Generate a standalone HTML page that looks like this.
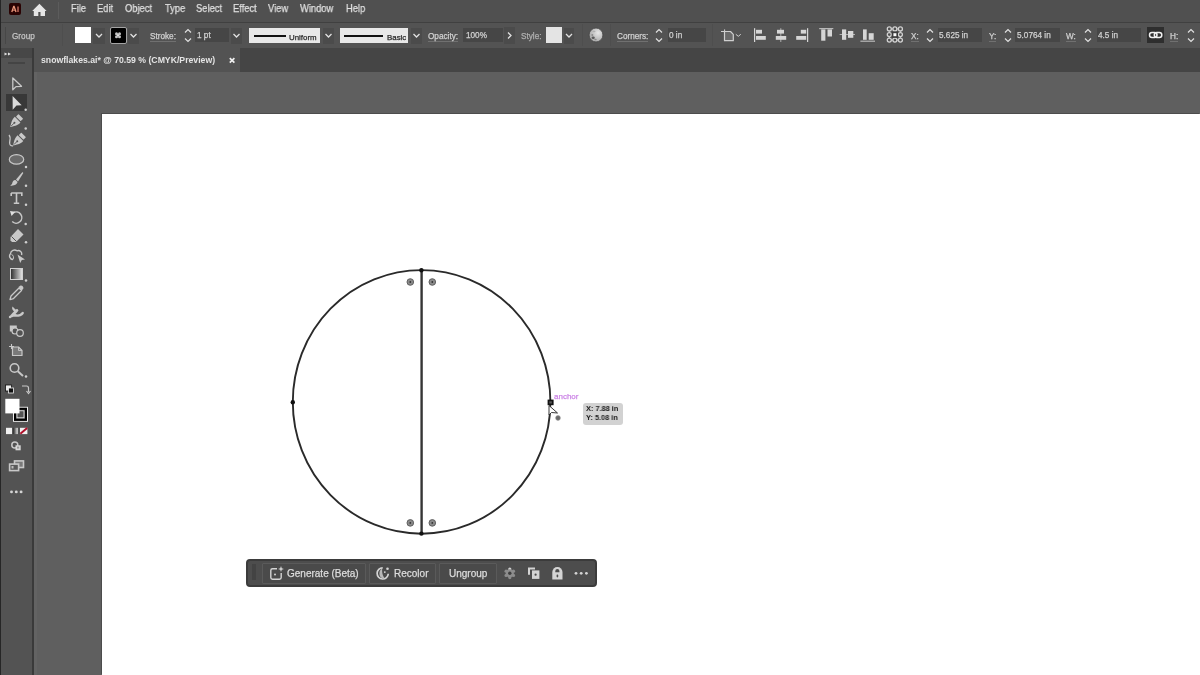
<!DOCTYPE html>
<html><head><meta charset="utf-8"><style>
*{margin:0;padding:0;box-sizing:border-box}
html,body{width:1200px;height:675px;overflow:hidden;background:#5f5f5f;font-family:"Liberation Sans",sans-serif}
.abs{position:absolute}
.t{position:absolute;white-space:nowrap;-webkit-text-stroke:0.25px currentColor;will-change:transform}
</style></head><body>
<div class="abs" style="left:0px;top:0px;width:1200px;height:22px;background:#505050;"></div>
<div class="abs" style="left:0px;top:22px;width:1200px;height:1px;background:#404040;"></div>
<div class="abs" style="left:0px;top:23px;width:1200px;height:25px;background:#535353;"></div>
<div class="abs" style="left:33px;top:48px;width:1167px;height:24px;background:#454545;"></div>
<div class="abs" style="left:34px;top:48px;width:206px;height:24px;background:#535353;"></div>
<div class="abs" style="left:1px;top:48px;width:31px;height:627px;background:#535353;"></div>
<div class="abs" style="left:1px;top:48px;width:31px;height:10px;background:#474747;"></div>
<div class="abs" style="left:32px;top:48px;width:2px;height:627px;background:#3a3a3a;"></div>
<div class="abs" style="left:34px;top:72px;width:1166px;height:603px;background:#5f5f5f;"></div>
<div class="abs" style="left:34px;top:72px;width:3px;height:603px;background:#636363;"></div>
<div class="abs" style="left:102px;top:114px;width:1098px;height:561px;background:#ffffff;box-shadow:-1px -1px 0 #4c4c4c"></div>
<div class="abs" style="left:0px;top:0px;width:1px;height:675px;background:#262626;"></div>
<div class="abs" style="left:8.7px;top:3.4px;width:12.3px;height:11.6px;background:#2a0303;border-radius:2px"></div>
<div class="t" style="left:71px;top:1.5px;font-size:11px;line-height:13px;color:#e0e0e0;transform:scaleX(0.85);transform-origin:0 0">File</div>
<div class="t" style="left:97px;top:1.5px;font-size:11px;line-height:13px;color:#e0e0e0;transform:scaleX(0.85);transform-origin:0 0">Edit</div>
<div class="t" style="left:125px;top:1.5px;font-size:11px;line-height:13px;color:#e0e0e0;transform:scaleX(0.85);transform-origin:0 0">Object</div>
<div class="t" style="left:165px;top:1.5px;font-size:11px;line-height:13px;color:#e0e0e0;transform:scaleX(0.85);transform-origin:0 0">Type</div>
<div class="t" style="left:196px;top:1.5px;font-size:11px;line-height:13px;color:#e0e0e0;transform:scaleX(0.85);transform-origin:0 0">Select</div>
<div class="t" style="left:233px;top:1.5px;font-size:11px;line-height:13px;color:#e0e0e0;transform:scaleX(0.85);transform-origin:0 0">Effect</div>
<div class="t" style="left:268px;top:1.5px;font-size:11px;line-height:13px;color:#e0e0e0;transform:scaleX(0.85);transform-origin:0 0">View</div>
<div class="t" style="left:300px;top:1.5px;font-size:11px;line-height:13px;color:#e0e0e0;transform:scaleX(0.85);transform-origin:0 0">Window</div>
<div class="t" style="left:346px;top:1.5px;font-size:11px;line-height:13px;color:#e0e0e0;transform:scaleX(0.85);transform-origin:0 0">Help</div>
<div class="abs" style="left:93px;top:28px;width:12px;height:15.5px;background:#4b4b4b;"></div>
<div class="abs" style="left:128px;top:28px;width:11px;height:15.5px;background:#4b4b4b;"></div>
<div class="abs" style="left:231px;top:28px;width:11px;height:15.5px;background:#4b4b4b;"></div>
<div class="abs" style="left:323px;top:28px;width:11px;height:15.5px;background:#4b4b4b;"></div>
<div class="abs" style="left:411px;top:28px;width:11px;height:15.5px;background:#4b4b4b;"></div>
<div class="abs" style="left:564px;top:28px;width:10px;height:15.5px;background:#4b4b4b;"></div>
<div class="abs" style="left:75px;top:27px;width:16px;height:16px;background:#ffffff;"></div>
<div class="abs" style="left:110px;top:27px;width:16.799999999999997px;height:16.799999999999997px;background:#000;border:1.6px solid #a4a4a4;border-radius:2px"></div>
<div class="abs" style="left:195px;top:28px;width:34px;height:14px;background:#464646;"></div>
<div class="abs" style="left:463px;top:28px;width:40px;height:14px;background:#464646;"></div>
<div class="abs" style="left:668px;top:28px;width:38px;height:14px;background:#464646;"></div>
<div class="abs" style="left:938px;top:28px;width:44px;height:14px;background:#464646;"></div>
<div class="abs" style="left:1015px;top:28px;width:45px;height:14px;background:#464646;"></div>
<div class="abs" style="left:1097px;top:28px;width:44px;height:14px;background:#464646;"></div>
<div class="abs" style="left:249.2px;top:27.7px;width:71.19999999999999px;height:15.500000000000004px;background:#e8e8e8;"></div>
<div class="abs" style="left:254px;top:35px;width:32px;height:2.3999999999999986px;background:#111;"></div>
<div class="abs" style="left:339.7px;top:27.7px;width:68.60000000000002px;height:15.500000000000004px;background:#e8e8e8;"></div>
<div class="abs" style="left:344px;top:35px;width:39px;height:2.3999999999999986px;background:#111;"></div>
<div class="abs" style="left:504px;top:27px;width:11px;height:17px;background:#4b4b4b;"></div>
<div class="abs" style="left:546px;top:27px;width:16px;height:16px;background:#e4e4e4;"></div>
<div class="abs" style="left:1147px;top:27px;width:17px;height:16px;background:#2e2e2e;"></div>
<div class="t" style="left:12px;top:32px;font-size:8.2px;line-height:10.2px;color:#c4c4c4;">Group</div>
<div class="t" style="left:150px;top:32px;font-size:8.2px;line-height:9px;color:#d0d0d0;border-bottom:1px solid #707070">Stroke:</div>
<div class="t" style="left:197px;top:31.2px;font-size:8.2px;line-height:10.2px;color:#d0d0d0;">1 pt</div>
<div class="t" style="left:289px;top:32.8px;font-size:7.9px;line-height:9.9px;color:#2a2a2a;">Uniform</div>
<div class="t" style="left:386.5px;top:32.8px;font-size:7.9px;line-height:9.9px;color:#2a2a2a;">Basic</div>
<div class="t" style="left:428px;top:32px;font-size:8.2px;line-height:9px;color:#d0d0d0;border-bottom:1px solid #707070">Opacity:</div>
<div class="t" style="left:466px;top:31.2px;font-size:8.2px;line-height:10.2px;color:#d0d0d0;">100%</div>
<div class="t" style="left:521px;top:32px;font-size:8.2px;line-height:10.2px;color:#b0b0b0;">Style:</div>
<div class="t" style="left:617px;top:32px;font-size:8.2px;line-height:9px;color:#d0d0d0;border-bottom:1px solid #707070">Corners:</div>
<div class="t" style="left:669px;top:31.2px;font-size:8.2px;line-height:10.2px;color:#d0d0d0;">0 in</div>
<div class="t" style="left:911px;top:32px;font-size:8.2px;line-height:9px;color:#d0d0d0;border-bottom:1px solid #707070">X:</div>
<div class="t" style="left:939px;top:31.2px;font-size:8.2px;line-height:10.2px;color:#d0d0d0;">5.625 in</div>
<div class="t" style="left:989px;top:32px;font-size:8.2px;line-height:9px;color:#d0d0d0;border-bottom:1px solid #707070">Y:</div>
<div class="t" style="left:1017px;top:31.2px;font-size:8.2px;line-height:10.2px;color:#d0d0d0;">5.0764 in</div>
<div class="t" style="left:1066px;top:32px;font-size:8.2px;line-height:9px;color:#d0d0d0;border-bottom:1px solid #707070">W:</div>
<div class="t" style="left:1098px;top:31.2px;font-size:8.2px;line-height:10.2px;color:#d0d0d0;">4.5 in</div>
<div class="t" style="left:1170px;top:32px;font-size:8.2px;line-height:9px;color:#d0d0d0;border-bottom:1px solid #707070">H:</div>
<div class="abs" style="left:58px;top:2px;width:1px;height:17px;background:#5c5c5c;"></div>
<div class="abs" style="left:5px;top:27px;width:1px;height:17px;background:#474747;"></div>
<div class="abs" style="left:62px;top:24px;width:1px;height:22px;background:#4e4e4e;"></div>
<div class="abs" style="left:582px;top:24px;width:1px;height:22px;background:#4e4e4e;"></div>
<div class="abs" style="left:610px;top:24px;width:1px;height:22px;background:#4e4e4e;"></div>
<div class="abs" style="left:712px;top:24px;width:1px;height:22px;background:#4e4e4e;"></div>
<div class="t" style="left:41px;top:55.3px;font-size:8.7px;line-height:11px;color:#e4e4e4;font-weight:bold;-webkit-text-stroke:0">snowflakes.ai* @ 70.59 % (CMYK/Preview)</div>
<div class="abs" style="left:8px;top:62px;width:17px;height:2px;background:#444444;"></div>
<div class="abs" style="left:6px;top:94px;width:21px;height:17px;background:#383838;"></div>
<div class="abs" style="left:582.5px;top:402.5px;width:40.0px;height:22.0px;background:#d2d2d2;border-radius:3px"></div>
<div class="t" style="left:554px;top:392px;font-size:8px;line-height:9px;color:#cc86e6;">anchor</div>
<div class="t" style="left:585.5px;top:403.6px;font-size:7.6px;line-height:9.5px;color:#1a1a1a;font-weight:bold;-webkit-text-stroke:0;transform:scaleX(0.97);transform-origin:0 0">X: 7.88 in</div>
<div class="t" style="left:585.5px;top:413.1px;font-size:7.6px;line-height:9.5px;color:#1a1a1a;font-weight:bold;-webkit-text-stroke:0;transform:scaleX(0.97);transform-origin:0 0">Y: 5.08 in</div>
<div class="abs" style="left:246px;top:558.5px;width:351px;height:28.5px;background:#4d4d4d;border:2px solid #3b3b3b;border-radius:4px"></div>
<div class="abs" style="left:252.4px;top:564.4px;width:3.5999999999999943px;height:15.600000000000023px;background:#434343;"></div>
<div class="abs" style="left:262px;top:562.5px;width:104px;height:21.5px;background:#4a4a4a;border:1px solid #5a5a5a;border-radius:1px"></div>
<div class="abs" style="left:369px;top:562.5px;width:67px;height:21.5px;background:#4a4a4a;border:1px solid #5a5a5a;border-radius:1px"></div>
<div class="abs" style="left:439px;top:562.5px;width:58px;height:21.5px;background:#4a4a4a;border:1px solid #5a5a5a;border-radius:1px"></div>
<div class="t" style="left:287px;top:567.5px;font-size:10px;line-height:12px;color:#dcdcdc;">Generate (Beta)</div>
<div class="t" style="left:394px;top:567.5px;font-size:10px;line-height:12px;color:#dcdcdc;">Recolor</div>
<div class="t" style="left:448.5px;top:567.5px;font-size:10px;line-height:12px;color:#dcdcdc;">Ungroup</div>
<svg class="abs" style="left:0;top:0" width="1200" height="675">
<path d="M96.0 34.0 L99.0 37.0 L102.0 34.0" fill="none" stroke="#e0e0e0" stroke-width="1.3"/>
<path d="M130.5 34.0 L133.5 37.0 L136.5 34.0" fill="none" stroke="#e0e0e0" stroke-width="1.3"/>
<path d="M233.5 34.0 L236.5 37.0 L239.5 34.0" fill="none" stroke="#e0e0e0" stroke-width="1.3"/>
<path d="M325.5 34.0 L328.5 37.0 L331.5 34.0" fill="none" stroke="#e0e0e0" stroke-width="1.3"/>
<path d="M413.5 34.0 L416.5 37.0 L419.5 34.0" fill="none" stroke="#e0e0e0" stroke-width="1.3"/>
<path d="M566.0 34.0 L569.0 37.0 L572.0 34.0" fill="none" stroke="#e0e0e0" stroke-width="1.3"/>
<circle cx="116.5" cy="33.7" r="1.5" fill="#c4c4c4"/>
<circle cx="119.5" cy="33.7" r="1.5" fill="#c4c4c4"/>
<circle cx="116.5" cy="36.7" r="1.5" fill="#c4c4c4"/>
<circle cx="119.5" cy="36.7" r="1.5" fill="#c4c4c4"/>
<circle cx="118" cy="35.2" r="1" fill="#f4f4f4"/>
<path d="M508 32.5 L511 35.5 L508 38.5" fill="none" stroke="#e0e0e0" stroke-width="1.3"/>
<path d="M185 32.5 L188 29.5 L191 32.5 M185 38.5 L188 41.5 L191 38.5" fill="none" stroke="#e0e0e0" stroke-width="1.2"/>
<path d="M656 32.5 L659 29.5 L662 32.5 M656 38.5 L659 41.5 L662 38.5" fill="none" stroke="#e0e0e0" stroke-width="1.2"/>
<path d="M927 32.5 L930 29.5 L933 32.5 M927 38.5 L930 41.5 L933 38.5" fill="none" stroke="#e0e0e0" stroke-width="1.2"/>
<path d="M1005 32.5 L1008 29.5 L1011 32.5 M1005 38.5 L1008 41.5 L1011 38.5" fill="none" stroke="#e0e0e0" stroke-width="1.2"/>
<path d="M1085 32.5 L1088 29.5 L1091 32.5 M1085 38.5 L1088 41.5 L1091 38.5" fill="none" stroke="#e0e0e0" stroke-width="1.2"/>
<path d="M1188 32.5 L1191 29.5 L1194 32.5 M1188 38.5 L1191 41.5 L1194 38.5" fill="none" stroke="#e0e0e0" stroke-width="1.2"/>
<path d="M39.4 3.8 L46.6 11 L45 11 L45 16 L40.5 16 L40.5 12 L38.3 12 L38.3 16 L33.8 16 L33.8 11 L32.2 11 Z" fill="#e6e6e6"/>
<defs><radialGradient id="gl" cx="0.65" cy="0.35" r="0.7"><stop offset="0" stop-color="#e6e6e6"/><stop offset="1" stop-color="#a8a8a8"/></radialGradient></defs>
<circle cx="596" cy="35" r="6.9" fill="url(#gl)" stroke="#404040" stroke-width="0.7"/>
<ellipse cx="593.2" cy="37.8" rx="1.6" ry="1.3" fill="#5a5a5a"/>
<ellipse cx="592.3" cy="35" rx="1" ry="1" fill="#8a8a8a"/>
<ellipse cx="595.5" cy="39.5" rx="1.2" ry="0.8" fill="#8a8a8a"/>
<ellipse cx="594" cy="31.5" rx="1.5" ry="0.8" fill="#b0b0b0"/>
<path d="M721 31.5 H725 M724.6 29.4 V33" stroke="#cfcfcf" stroke-width="1"/>
<path d="M724.5 31.5 H730.5 L733.3 34.3 V40.7 H724.5 Z" fill="#6a6a6a" stroke="#cfcfcf" stroke-width="1.2" stroke-linejoin="round"/>
<path d="M735.8 34.3 L738.3 36.3 L740.8 34.3" fill="none" stroke="#cfcfcf" stroke-width="1"/>
<rect x="754" y="28.2" width="1.2000000000000455" height="13.8" fill="#d6d6d6"/>
<rect x="756" y="29.8" width="6" height="3.8000000000000007" fill="#d6d6d6"/>
<rect x="756" y="36" width="9.799999999999955" height="3.799999999999997" fill="#d6d6d6"/>
<rect x="780.3" y="28.2" width="1.0" height="13.8" fill="#b0b0b0"/>
<rect x="777" y="29.8" width="7" height="3.8000000000000007" fill="#d6d6d6"/>
<rect x="775.8" y="36" width="10.400000000000091" height="3.799999999999997" fill="#d6d6d6"/>
<rect x="807" y="28.2" width="1.2000000000000455" height="13.8" fill="#d6d6d6"/>
<rect x="800.8" y="29.8" width="5.400000000000091" height="3.8000000000000007" fill="#d6d6d6"/>
<rect x="796.2" y="36" width="10.0" height="3.799999999999997" fill="#d6d6d6"/>
<rect x="819.2" y="28" width="14.099999999999909" height="1.1999999999999993" fill="#b8b8b8"/>
<rect x="821.2" y="29.4" width="4.199999999999932" height="11.300000000000004" fill="#d6d6d6"/>
<rect x="827.5" y="29.4" width="4.5" height="7.100000000000001" fill="#d6d6d6"/>
<rect x="839.6" y="34" width="15.399999999999977" height="1" fill="#b0b0b0"/>
<rect x="842" y="29.4" width="4.2000000000000455" height="10.399999999999999" fill="#d6d6d6"/>
<rect x="848" y="31" width="5.2999999999999545" height="6.799999999999997" fill="#d6d6d6"/>
<rect x="860.4" y="40.6" width="14.600000000000023" height="1.1999999999999957" fill="#b8b8b8"/>
<rect x="863" y="29.4" width="3.7000000000000455" height="10.399999999999999" fill="#d6d6d6"/>
<rect x="868.7" y="33.2" width="5.0" height="6.599999999999994" fill="#d6d6d6"/>
<rect x="889.3" y="28.9" width="11.1" height="11.2" fill="none" stroke="#bdbdbd" stroke-width="1"/>
<circle cx="889.3" cy="28.9" r="2" fill="#505050" stroke="#d2d2d2" stroke-width="1.3"/>
<circle cx="889.3" cy="34.6" r="2" fill="#505050" stroke="#d2d2d2" stroke-width="1.3"/>
<circle cx="889.3" cy="40.1" r="2" fill="#505050" stroke="#d2d2d2" stroke-width="1.3"/>
<circle cx="894.9" cy="28.9" r="2" fill="#505050" stroke="#d2d2d2" stroke-width="1.3"/>
<circle cx="894.9" cy="40.1" r="2" fill="#505050" stroke="#d2d2d2" stroke-width="1.3"/>
<circle cx="900.4" cy="28.9" r="2" fill="#505050" stroke="#d2d2d2" stroke-width="1.3"/>
<circle cx="900.4" cy="34.6" r="2" fill="#505050" stroke="#d2d2d2" stroke-width="1.3"/>
<circle cx="900.4" cy="40.1" r="2" fill="#505050" stroke="#d2d2d2" stroke-width="1.3"/>
<rect x="891.8" y="31.6" width="6.2000000000000455" height="6.199999999999996" fill="#3c3c3c"/>
<rect x="893.4" y="33.2" width="3.0" height="3.0" fill="#fafafa"/>
<rect x="1149.5" y="32.5" width="7.5" height="5" rx="2.5" fill="none" stroke="#f0f0f0" stroke-width="1.5"/>
<rect x="1154.3" y="32.5" width="7.5" height="5" rx="2.5" fill="none" stroke="#f0f0f0" stroke-width="1.5"/>
<path d="M11.8 12 L13.7 6.5 L14.1 6.5 L16 12" fill="none" stroke="#e9967a" stroke-width="1.3"/>
<path d="M12.6 10.2 H15.2" stroke="#e9967a" stroke-width="0.9"/>
<rect x="17.3" y="6.5" width="1.4" height="5.5" fill="#c87060"/>
<path d="M229.8 58.2 L234.4 62.6 M234.4 58.2 L229.8 62.6" stroke="#f0f0f0" stroke-width="1.7"/>
<path d="M4.5 52.5 L7.5 54 L4.5 55.5Z M8 52.5 L11 54 L8 55.5Z" fill="#e0e0e0"/>
<path d="M12.8 78 L21.5 86.3 L16 86.6 L12.8 89.8Z" fill="none" stroke="#c8c8c8" stroke-width="1.3" stroke-linejoin="round"/>
<path d="M12.6 96 L21.7 105.3 L16.5 105.5 L12.7 109.7Z" fill="#dadada"/>
<circle cx="25.7" cy="109.7" r="1.25" fill="#cfcfcf"/>
<g transform="translate(10.2,127) rotate(45)"><path d="M0 0 C-1.5 -3 -4.3 -6 -4 -10.5 L4 -10.5 C4.3 -6 1.5 -3 0 0Z" fill="#c8c8c8"/><rect x="-3.3" y="-15" width="6.6" height="3.6" rx="0.6" fill="#c8c8c8"/><path d="M0 -1.5 V-5.5" stroke="#535353" stroke-width="0.9"/><circle cx="0" cy="-6" r="1" fill="#535353"/></g>
<circle cx="25.7" cy="128.4" r="1.25" fill="#cfcfcf"/>
<g transform="translate(13,145.5) rotate(45)"><path d="M0 0 C-1.5 -3 -4.3 -6 -4 -10.5 L4 -10.5 C4.3 -6 1.5 -3 0 0Z" fill="#c8c8c8"/><rect x="-3.3" y="-15" width="6.6" height="3.6" rx="0.6" fill="#c8c8c8"/><path d="M0 -1.5 V-5.5" stroke="#535353" stroke-width="0.9"/><circle cx="0" cy="-6" r="1" fill="#535353"/></g>
<path d="M13 145.8 C10 146.5 9.2 144 9.8 141 C10.3 138.5 10.5 136.5 9 135" fill="none" stroke="#c8c8c8" stroke-width="1.3"/>
<ellipse cx="16.5" cy="159.4" rx="7.2" ry="4.8" fill="#6a6a6a" stroke="#c8c8c8" stroke-width="1.2"/>
<circle cx="26" cy="167" r="1.25" fill="#cfcfcf"/>
<path d="M22.5 172 L16 179.5 L18 181.5 L23.3 173 Z" fill="#c8c8c8"/>
<path d="M15.5 180 C13 180 12.5 182 12 184 L10.2 185.7 C13 185.8 17 185 17.5 182 Z" fill="#c8c8c8"/>
<circle cx="26" cy="185.7" r="1.25" fill="#cfcfcf"/>
<path d="M11.2 193 H21.8 V196 M11.2 193 V196 M16.5 193 V203.3 M13.8 203.3 H19.2" fill="none" stroke="#c8c8c8" stroke-width="1.6"/>
<circle cx="26" cy="204.7" r="1.25" fill="#cfcfcf"/>
<path d="M13.2 212.8 A5.6 5.6 0 1 1 12.2 221.5" fill="none" stroke="#c8c8c8" stroke-width="1.5"/>
<path d="M10 211 L15.2 211.8 L11.6 216Z" fill="#e0e0e0"/>
<circle cx="25.7" cy="224" r="1.25" fill="#cfcfcf"/>
<path d="M10.5 237 L18 229 L23.5 234.5 L16 242 L12 242 L10.5 240.5Z" fill="#c8c8c8"/>
<path d="M11.5 236.5 L16.5 241.5" stroke="#535353" stroke-width="1"/>
<circle cx="26" cy="242.3" r="1.25" fill="#cfcfcf"/>
<path d="M13 259.5 C9.5 259.5 8.8 255.5 10.5 253.8 C10.8 250.5 14.5 249 17 250.8 C19.8 249.8 22.5 252 21.5 255" fill="none" stroke="#c8c8c8" stroke-width="1.4"/>
<path d="M13 259.5 C14 257.5 13.5 255 11.5 254.5" fill="none" stroke="#c8c8c8" stroke-width="1"/>
<path d="M17.5 254.5 L25 259.5 L21.8 260 L20.2 263Z" fill="#c8c8c8"/>
<defs><linearGradient id="gr" x1="0" x2="1"><stop offset="0" stop-color="#2a2a2a"/><stop offset="1" stop-color="#e8e8e8"/></linearGradient></defs>
<rect x="10.5" y="268.5" width="12" height="11" fill="url(#gr)" stroke="#d0d0d0" stroke-width="1"/>
<circle cx="26" cy="280.5" r="1.25" fill="#cfcfcf"/>
<path d="M10 299.5 L11 296 L19 288 L21.5 290.5 L13.5 298.5 Z" fill="none" stroke="#c8c8c8" stroke-width="1.3" stroke-linejoin="round"/>
<path d="M18.5 287 L20.5 285.5 C22 285 24 287 23.3 288.5 L21.8 290.7 Z" fill="#c8c8c8"/>
<path d="M9.5 316.5 C11 314 12.5 313 14 311.5 C12.5 310 11.5 308.5 12.5 306.5 C13.5 307.5 14.5 308.5 15.5 309.5 C17 308.5 18 309 18.5 310.5 C17.5 312 16.5 313 15.5 314 C17.5 315 20 314.5 21.5 312.5 C22.5 311.5 23.5 311.5 24 313 C23 315 21.5 316.5 18.5 316.8 C15.5 317 13 316 11.5 317.5 Z" fill="#c8c8c8"/>
<circle cx="10" cy="317" r="1.2" fill="#c8c8c8"/>
<rect x="9.8" y="325.5" width="7" height="6" fill="#c8c8c8"/>
<circle cx="15" cy="331" r="3" fill="#535353" stroke="#c8c8c8" stroke-width="1.2"/>
<circle cx="20" cy="333" r="3.3" fill="#535353" stroke="#c8c8c8" stroke-width="1.2"/>
<path d="M9 346.5 H14 M11.5 344 V349" stroke="#c8c8c8" stroke-width="1.1"/>
<path d="M12.5 347 H18.5 L22 350.5 V355.5 H12.5 Z" fill="#7a7a7a" stroke="#c8c8c8" stroke-width="1.2" stroke-linejoin="round"/>
<path d="M18.5 347 V350.5 H22" fill="none" stroke="#c8c8c8" stroke-width="0.9"/>
<circle cx="14.5" cy="368" r="4.3" fill="none" stroke="#c8c8c8" stroke-width="1.6"/>
<path d="M17.8 371.3 L23 376" stroke="#c8c8c8" stroke-width="2"/>
<circle cx="26" cy="376.5" r="1.25" fill="#cfcfcf"/>
<rect x="5.5" y="385" width="6" height="6" fill="#eee" stroke="#111" stroke-width="0.8"/>
<rect x="8.5" y="388" width="5" height="5" fill="#111" stroke="#eee" stroke-width="0.8"/>
<path d="M22 386 H26.5 Q28.5 386 28.5 388 V392" fill="none" stroke="#c8c8c8" stroke-width="1.2"/>
<path d="M26.5 391 L28.5 393.5 L30.5 391" fill="none" stroke="#c8c8c8" stroke-width="1.2"/>
<rect x="13.5" y="407.3" width="14" height="14" fill="none" stroke="#f0f0f0" stroke-width="1"/>
<rect x="15" y="408.8" width="11" height="11" fill="none" stroke="#000" stroke-width="2"/>
<rect x="17" y="410.8" width="7" height="7" fill="#535353" stroke="#f0f0f0" stroke-width="0.8"/>
<rect x="5.3" y="398.8" width="14.2" height="14.6" fill="#ffffff"/>
<rect x="6" y="427.8" width="6" height="6.3" fill="#f0f0f0"/>
<rect x="13.3" y="427.8" width="4.5" height="6.3" fill="url(#gr)"/>
<rect x="20" y="427.8" width="7.4" height="6.3" fill="#f0f0f0"/>
<path d="M20.3 433.8 L27.2 428" stroke="#b0102a" stroke-width="2"/>
<circle cx="14.8" cy="445" r="3" fill="none" stroke="#c8c8c8" stroke-width="1.5"/>
<rect x="15.5" y="445.3" width="5.2" height="5" fill="#d8d8d8"/>
<rect x="17" y="446.6" width="2.2" height="2" fill="#9a9a9a"/>
<rect x="14.5" y="460.9" width="9" height="6.6" fill="#7a7a7a" stroke="#c8c8c8" stroke-width="1.6"/>
<rect x="9.6" y="464.1" width="9" height="6.5" fill="#5a5a5a" stroke="#c8c8c8" stroke-width="1.6"/>
<rect x="11.5" y="466" width="2" height="2.5" fill="#bdbdbd"/>
<circle cx="11.5" cy="491.9" r="1.45" fill="#d4d4d4"/>
<circle cx="16.3" cy="491.9" r="1.45" fill="#d4d4d4"/>
<circle cx="21.1" cy="491.9" r="1.45" fill="#d4d4d4"/>
<ellipse cx="421.6" cy="401.9" rx="128.8" ry="131.8" fill="none" stroke="#2a2a2a" stroke-width="1.9"/>
<line x1="421.6" y1="270" x2="421.6" y2="533.7" stroke="#353535" stroke-width="2.4"/>
<circle cx="421.4" cy="270.2" r="2.2" fill="#111"/>
<circle cx="421.4" cy="533.6" r="2.2" fill="#111"/>
<circle cx="292.8" cy="402.2" r="2.2" fill="#111"/>
<rect x="547.6" y="399.6" width="6" height="5.6" fill="#111"/>
<rect x="549.3" y="401.3" width="2.6" height="2.2" fill="#555"/>
<circle cx="410.3" cy="282" r="3.3" fill="#8a8a8a" stroke="#606060" stroke-width="1"/>
<circle cx="410.3" cy="282" r="0.9" fill="#333"/>
<circle cx="432.3" cy="282" r="3.3" fill="#8a8a8a" stroke="#606060" stroke-width="1"/>
<circle cx="432.3" cy="282" r="0.9" fill="#333"/>
<circle cx="410.3" cy="522.9" r="3.3" fill="#8a8a8a" stroke="#606060" stroke-width="1"/>
<circle cx="410.3" cy="522.9" r="0.9" fill="#333"/>
<circle cx="432.3" cy="522.9" r="3.3" fill="#8a8a8a" stroke="#606060" stroke-width="1"/>
<circle cx="432.3" cy="522.9" r="0.9" fill="#333"/>
<path d="M549 405.5 L549 415 L551.5 412.5 L557.5 413 Z" fill="#fff" stroke="#222" stroke-width="0.9" stroke-linejoin="round"/>
<circle cx="558" cy="418" r="2.4" fill="#6a6a6a" stroke="#999" stroke-width="0.6"/>
<path d="M277 568.8 H272.5 Q270.8 568.8 270.8 570.5 V577.5 Q270.8 579.2 272.5 579.2 H279.5 Q281.2 579.2 281.2 577.5 V573" fill="none" stroke="#d4d4d4" stroke-width="1.4"/>
<circle cx="275" cy="574.5" r="1" fill="#d4d4d4"/>
<path d="M281 566 L281.8 568.2 L284 569 L281.8 569.8 L281 572 L280.2 569.8 L278 569 L280.2 568.2Z" fill="#d4d4d4"/>
<path d="M382.7 567.8 A5.6 5.6 0 1 0 388.3 573.8" fill="none" stroke="#d4d4d4" stroke-width="1.7"/>
<path d="M382.2 568.5 C379 570 378.5 575 381 577.5 C382.5 578.5 384 578.5 384.5 578 C382 575 382 571 382.2 568.5Z" fill="#b8b8b8"/>
<circle cx="387.5" cy="568.7" r="1.3" fill="#d4d4d4"/>
<circle cx="384.8" cy="572.1" r="0.95" fill="#d4d4d4"/>
<circle cx="509.80" cy="569.00" r="1.6" fill="#d0d0d0"/>
<circle cx="513.52" cy="571.15" r="1.6" fill="#8c8c8c"/>
<circle cx="513.52" cy="575.45" r="1.6" fill="#8c8c8c"/>
<circle cx="509.80" cy="577.60" r="1.6" fill="#8c8c8c"/>
<circle cx="506.08" cy="575.45" r="1.6" fill="#8c8c8c"/>
<circle cx="506.08" cy="571.15" r="1.6" fill="#8c8c8c"/>
<circle cx="509.8" cy="573.3" r="4" fill="#8c8c8c"/>
<circle cx="509.8" cy="573.3" r="1.7" fill="#3e3e3e"/>
<path d="M528 567.5 H535 V569.5 H530 V574.8 H528Z" fill="#d4d4d4"/>
<rect x="532" y="570.4" width="7.4" height="8.5" fill="#d4d4d4"/>
<circle cx="535.6" cy="574.7" r="1.1" fill="#4a4a4a"/>
<path d="M552.3 579.6 V572 A5.1 5.1 0 0 1 562.5 572 V579.6 Z" fill="#d4d4d4"/>
<path d="M555.3 572.3 V571 A2.05 2.05 0 0 1 559.4 571 V572.3 Z" fill="#4d4d4d"/>
<ellipse cx="557.4" cy="576" rx="0.9" ry="1.4" fill="#4d4d4d"/>
<circle cx="576" cy="573.3" r="1.4" fill="#d4d4d4"/>
<circle cx="581.2" cy="573.3" r="1.4" fill="#d4d4d4"/>
<circle cx="586.4" cy="573.3" r="1.4" fill="#d4d4d4"/>
</svg>
</body></html>
